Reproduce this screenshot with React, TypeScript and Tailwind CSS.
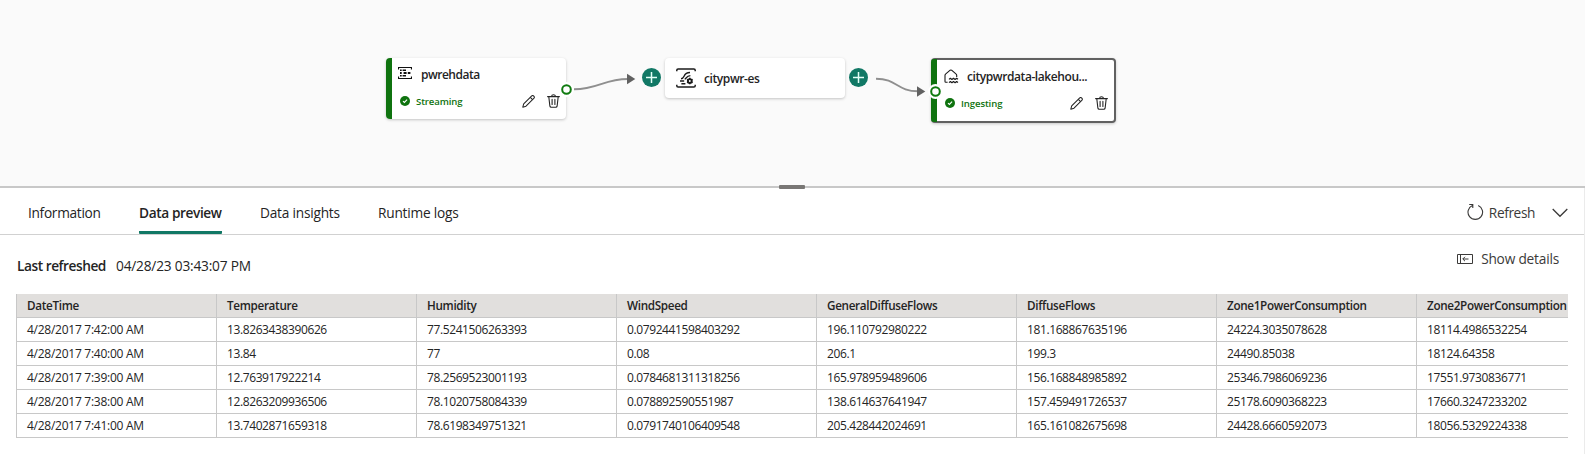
import React from "react";

const columns = [
  "DateTime",
  "Temperature",
  "Humidity",
  "WindSpeed",
  "GeneralDiffuseFlows",
  "DiffuseFlows",
  "Zone1PowerConsumption",
  "Zone2PowerConsumption",
];

const rows = [
  ["4/28/2017 7:42:00 AM", "13.8263438390626", "77.5241506263393", "0.0792441598403292", "196.110792980222", "181.168867635196", "24224.3035078628", "18114.4986532254"],
  ["4/28/2017 7:40:00 AM", "13.84", "77", "0.08", "206.1", "199.3", "24490.85038", "18124.64358"],
  ["4/28/2017 7:39:00 AM", "12.763917922214", "78.2569523001193", "0.0784681311318256", "165.978959489606", "156.168848985892", "25346.7986069236", "17551.9730836771"],
  ["4/28/2017 7:38:00 AM", "12.8263209936506", "78.1020758084339", "0.078892590551987", "138.614637641947", "157.459491726537", "25178.6090368223", "17660.3247233202"],
  ["4/28/2017 7:41:00 AM", "13.7402871659318", "78.6198349751321", "0.0791740106409548", "205.428442024691", "165.161082675698", "24428.6660592073", "18056.5329224338"],
];

function CheckBadge() {
  return (
    <svg width="10" height="10" viewBox="0 0 10 10" className="shrink-0">
      <circle cx="5" cy="5" r="5" fill="#0f730f" />
      <path d="M3 5.1 4.4 6.5 7.1 3.7" fill="none" stroke="#fff" strokeWidth="1.1" />
    </svg>
  );
}

function Pencil() {
  return (
    <svg width="13" height="13" viewBox="0 0 13 13" fill="none" stroke="#242424" strokeWidth="1.05" strokeLinejoin="round" className="shrink-0">
      <path d="M.8 12.2 1.7 8.9 9.5 1.1a1.55 1.55 0 0 1 2.3 2.3L4 11.2Z" />
      <path d="M8.3 2.4 10.6 4.7" />
    </svg>
  );
}

function Trash() {
  return (
    <svg width="13" height="14" viewBox="0 0 13 14" fill="none" stroke="#242424" strokeWidth="1.1" strokeLinecap="round" strokeLinejoin="round" className="shrink-0">
      <path d="M.6 2.6H12.4M4.6 2.4C4.6.2 8.4.2 8.4 2.4M1.8 2.8 2.9 12.2Q3.1 13.3 4.2 13.3H8.8Q9.9 13.3 10.1 12.2L11.2 2.8M5.1 5.4V10.4M7.9 5.4V10.4" />
    </svg>
  );
}

function EventHubIcon() {
  return (
    <svg width="14" height="12" viewBox="0 0 14 12" className="shrink-0">
      <path d="M.5 2.4V.5H13.5V2.4M.5 9.6V11.5H13.5V9.6" fill="none" stroke="#111" strokeWidth="1.2" />
      <path d="M2 2.4h1.7V4H2zM4.6 2.4h3.4V4H4.6zM2 5.1h1.7v1.8H2zM5.6 5.1h3v1.8h-3zM9.8 5.1h2.6v1.8H9.8zM2 8h1.7v1.6H2zM4.6 8h3.4v1.6H4.6z" fill="#111" />
    </svg>
  );
}

function EventStreamIcon() {
  return (
    <svg width="20" height="20" viewBox="0 0 20 20" fill="none" stroke="#1b1b1b" strokeWidth="1.5" className="shrink-0">
      <path d="M.8 3.2V2.2Q.8 .9 2.1 .9H17.9Q19.2 .9 19.2 2.2V3.2M.8 16.8V17.8Q.8 19.1 2.1 19.1H17.9Q19.2 19.1 19.2 17.8V16.8" />
      <path d="M5 10.7C9.5 10.7 6.4 4.5 14 4.5M8.7 11.2C11 10.5 10 7.8 14.4 7.6M4 13H8.2M5.4 15.7H9.4" strokeWidth="1.4" />
      <circle cx="13.8" cy="13" r="1.9" strokeWidth="1.9" />
      <path d="M13.8 9.7V11M13.8 15V16.3M11 11.3 12 11.9M15.6 14.1 16.6 14.7M11 14.7 12 14.1M15.6 11.9 16.6 11.3" strokeWidth="1.5" />
    </svg>
  );
}

function LakehouseIcon() {
  return (
    <svg width="15" height="15" viewBox="0 0 15 15" fill="none" stroke="#1b1b1b" strokeWidth="1.1" strokeLinejoin="round" className="shrink-0">
      <path d="M3.6 13.3H1.8Q1 13.3 1 12.5V6.2Q1 5.6 1.5 5.2L6.2 1.2Q6.9.7 7.6 1.2L12.2 5.2Q12.7 5.6 12.7 6.2V8" />
      <path d="M5 10.4 6.4 9.3 7.9 10.5 9.5 9.3 11.1 10.5 12.6 9.3 14 10.3M5 13.6 6.4 12.5 7.9 13.7 9.5 12.5 11.1 13.7 12.6 12.5 14 13.5" strokeWidth="1.2" />
    </svg>
  );
}

function Port({ className }: { className: string }) {
  return (
    <svg width="15" height="15" viewBox="0 0 15 15" className={"absolute " + className}>
      <circle cx="7.5" cy="7.5" r="7.4" fill="#fff" />
      <circle cx="7.5" cy="7.5" r="4.3" fill="#fff" stroke="#0f7a0f" strokeWidth="2" />
    </svg>
  );
}

function AddButton({ className }: { className: string }) {
  return (
    <button className={"absolute size-[19px] " + className}>
      <svg width="19" height="19" viewBox="0 0 19 19">
        <circle cx="9.5" cy="9.5" r="9.5" fill="#117865" />
        <path d="M9.5 4V15M4 9.5H15" stroke="#e4fff8" strokeWidth="1.5" />
      </svg>
    </button>
  );
}

function Canvas() {
  return (
    <section className="relative h-[186px] bg-[#fafafa]">
      <svg width="1585" height="186" className="absolute top-0 left-0" fill="none" stroke="#8f8f8f" strokeWidth="1.9">
        <path d="M574 89.3C598 89.3 604 79 628 79" />
        <path d="M627 73.8 635.3 79 627 84.2Z" fill="#616161" stroke="none" />
        <path d="M876 78.7C897 78.7 897 91.3 918 91.3" />
        <path d="M917 86.3 925.3 91.5 917 96.7Z" fill="#616161" stroke="none" />
      </svg>

      <div className="absolute top-[58px] left-[386px] flex h-[61px] w-[180px] rounded-[4px] bg-white shadow-[0_1px_3px_rgba(0,0,0,0.22)]">
        <div className="w-[6px] rounded-l-[4px] bg-[#0f730f]" />
        <div className="flex-1 pt-[5px] pl-[6px]">
          <div className="flex h-[20px] items-center gap-[9px]">
            <EventHubIcon />
            <span className="pt-[4px] text-[12px] font-semibold tracking-[-0.5px]">pwrehdata</span>
          </div>
          <div className="mt-[8px] flex h-[20px] items-center pl-[2px]">
            <CheckBadge />
            <span className="ml-[6px] pt-[2px] text-[9.6px] font-semibold tracking-[-0.12px] text-[#0f730f]">Streaming</span>
            <span className="mr-[6.5px] ml-auto flex items-center gap-[12px]">
              <Pencil />
              <Trash />
            </span>
          </div>
        </div>
        <Port className="top-[24px] left-[172.5px]" />
      </div>

      <AddButton className="top-[68px] left-[642px]" />
      <div className="absolute top-[58px] left-[665px] flex h-[40px] w-[180px] items-center gap-[8px] rounded-[4px] bg-white pl-[11px] shadow-[0_1px_3px_rgba(0,0,0,0.22)]">
        <EventStreamIcon />
        <span className="pt-px text-[12px] font-semibold tracking-[-0.4px]">citypwr-es</span>
      </div>
      <AddButton className="top-[68px] left-[849px]" />

      <div className="absolute top-[58px] left-[931px] flex h-[65px] w-[185px] rounded-[4px] border-2 border-l-0 border-[#616161] bg-white shadow-[0_1px_3px_rgba(0,0,0,0.2)]">
        <div className="-my-px w-[6px] rounded-l-[3px] bg-[#0f730f]" />
        <div className="flex-1 pt-[6px] pl-[7px]">
          <div className="flex h-[20px] items-center gap-[8px]">
            <LakehouseIcon />
            <span className="pt-[2px] text-[12px] font-semibold tracking-[-0.42px]">citypwrdata-lakehou...</span>
          </div>
          <div className="mt-[7px] flex h-[20px] items-center pl-px">
            <CheckBadge />
            <span className="ml-[6px] pt-[2px] text-[9.6px] font-semibold tracking-[-0.12px] text-[#0f730f]">Ingesting</span>
            <span className="mr-[6.5px] ml-auto flex items-center gap-[12px]">
              <Pencil />
              <Trash />
            </span>
          </div>
        </div>
        <Port className="top-[23.5px] -left-[3.5px]" />
      </div>
    </section>
  );
}

function Tabs() {
  return (
    <nav className="flex h-[47px] items-stretch border-b border-[#d1d1d1] pl-[28px] text-[13.7px]">
      <span className="w-[111px] pt-[15px] leading-[20px] tracking-[-0.3px]">Information</span>
      <span className="mr-[38px] w-[83px] rounded-b-[1px] border-b-[3px] border-[#117865] pt-[15px] leading-[20px] font-semibold tracking-[-0.4px] whitespace-nowrap">Data preview</span>
      <span className="w-[118px] pt-[15px] leading-[20px] tracking-[-0.22px]">Data insights</span>
      <span className="pt-[15px] leading-[20px] tracking-[-0.22px]">Runtime logs</span>
      <span className="mr-[16px] ml-auto flex items-start text-[#3b3a39]">
        <svg width="17" height="18" viewBox="0 0 17 18" fill="none" stroke="#3b3a39" strokeWidth="1.1" className="mt-[15px]">
          <path d="M5.4 2.4A7.3 7.3 0 1 0 11.2 2.4M2.2 1.5H5.8V5.1" />
        </svg>
        <span className="ml-[5px] pt-[15px] leading-[20px] tracking-[-0.4px]">Refresh</span>
        <svg width="16" height="10" viewBox="0 0 16 10" fill="none" stroke="#3b3a39" strokeWidth="1.3" className="mt-[20px] ml-[17px]">
          <path d="M.7 1 8 8.3 15.3 1" />
        </svg>
      </span>
    </nav>
  );
}

export default function App() {
  return (
    <main className="h-[454px] w-[1585px] overflow-hidden bg-white font-['Open_Sans','Noto_Sans',sans-serif] text-[#242424]">
      <Canvas />
      <div className="relative h-[2px] bg-[#c8c8c8]">
        <div className="absolute -top-px left-[779px] h-[4px] w-[26px] rounded-[1px] bg-[#797775]" />
      </div>
      <section className="h-[266px] border-r border-[#ebebeb]">
        <Tabs />
        <div className="flex h-[59px] text-[13.7px] leading-[20px]">
          <span className="w-[116px] pt-[21px] pl-[17px] font-semibold tracking-[-0.46px]">Last refreshed</span>
          <span className="pt-[21px] tracking-[-0.2px]">04/28/23 03:43:07 PM</span>
          <span className="mr-[25px] ml-auto flex items-start text-[#3b3a39]">
            <svg width="16" height="10" viewBox="0 0 16 10" fill="none" stroke="#3b3a39" strokeWidth="1" className="mt-[19px]">
              <path d="M.5.5H15.5V9.5H.5ZM3.5.5V9.5M5.8 5H11.5M8 2.8 5.8 5 8 7.2" />
            </svg>
            <span className="ml-[8px] pt-[14px] tracking-[-0.2px]">Show details</span>
          </span>
        </div>
        <div className="ml-[16px] w-[1552px] overflow-hidden">
          <table className="w-[1601px] table-fixed border-separate border-spacing-0 border-l border-[#c8c8c8] text-left text-[12px]">
            <thead>
              <tr className="h-[24px] bg-[#e1dfdd]">
                {columns.map((c) => (
                  <th key={c} className="border-r border-b border-[#c8c8c8] p-0 pl-[10px] text-[11.7px] leading-[23px] font-semibold tracking-[-0.32px]">{c}</th>
                ))}
              </tr>
            </thead>
            <tbody>
              {rows.map((r) => (
                <tr key={r[0]} className="h-[24px]">
                  {r.map((v, i) => (
                    <td key={i} className="border-r border-b border-[#c8c8c8] p-0 pl-[10px] leading-[23px] tracking-[-0.39px] first:tracking-[-0.26px]">{v}</td>
                  ))}
                </tr>
              ))}
            </tbody>
          </table>
        </div>
      </section>
    </main>
  );
}
